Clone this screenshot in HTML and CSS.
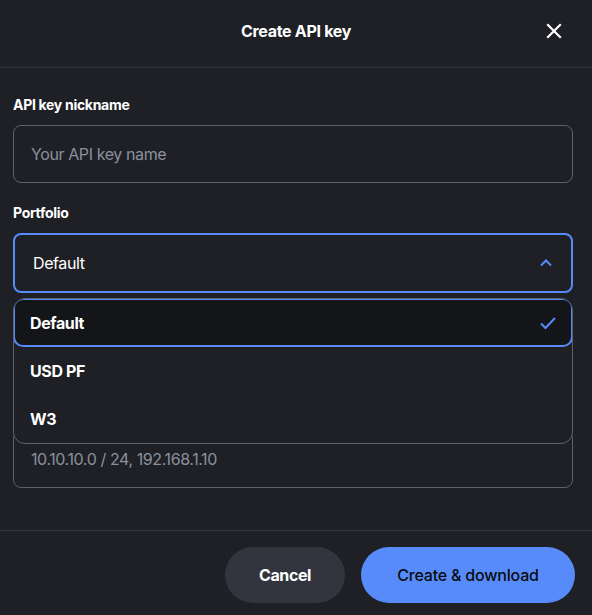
FILE: index.html
```html
<!DOCTYPE html>
<html lang="en">
<head>
  <meta charset="UTF-8">
  <meta name="viewport" content="width=device-width, initial-scale=1.0">
  <title>Create API key</title>
  <link rel="stylesheet" href="styles.css">
</head>
<body>
  <div class="modal">
    <div class="modal-header">
      <span></span>
      <h1>Create API key</h1>
      <button class="close-btn" aria-label="Close">
        <svg width="16" height="16" viewBox="0 0 16 16"><path d="M2 2 L14 14 M14 2 L2 14" stroke="#fff" stroke-width="2.2" stroke-linecap="square"/></svg>
      </button>
    </div>

    <div class="modal-body">
      <div class="field">
        <label class="field-label">API key nickname</label>
        <input class="text-input" type="text" placeholder="Your API key name">
      </div>

      <div class="field select-field">
        <label class="field-label">Portfolio</label>
        <div class="select open">
          <span>Default</span>
          <svg width="14" height="10" viewBox="0 0 14 10"><path d="M2 7.5 L7 2.5 L12 7.5" fill="none" stroke="#578bfa" stroke-width="2"/></svg>
        </div>
        <ul class="menu">
          <li class="menu-item selected">
            <span>Default</span>
            <svg width="18" height="16" viewBox="0 0 18 16"><path d="M2 8.5 L6.5 13 L16 3" fill="none" stroke="#578bfa" stroke-width="2"/></svg>
          </li>
          <li class="menu-item"><span>USD PF</span></li>
          <li class="menu-item"><span>W3</span></li>
        </ul>
      </div>

      <div class="field ip-field">
        <input class="text-input" type="text" aria-label="IP whitelist" placeholder="10.10.10.0 / 24, 192.168.1.10">
      </div>
    </div>

    <div class="modal-footer">
      <button class="btn btn-secondary">Cancel</button>
      <button class="btn btn-primary">Create &amp; download</button>
    </div>
  </div>
</body>
</html>
```

FILE: styles.css
```css
body {
  margin: 0;
  background-color: #1e2025;
  font-family: 'Inter', 'Noto Sans', sans-serif;
  color: #fff;
}

.modal {
  width: 592px;
}

.modal-header {
  box-sizing: border-box;
  display: grid;
  grid-template-columns: 1fr auto 1fr;
  align-items: center;
  height: 68px;
  border-bottom: 1px solid #32353d;
  padding: 0 26px 5px;
}

.modal-header h1 {
  margin: 0;
  font-size: 16px;
  font-weight: 700;
  letter-spacing: -0.3px;
}

.close-btn {
  justify-self: end;
  background: none;
  border: none;
  padding: 4px;
  display: flex;
  cursor: pointer;
}

.modal-body {
  padding: 27px 19px 42px 13px;
}

.field {
  margin-bottom: 20px;
}

.field-label {
  display: block;
  font-size: 14px;
  font-weight: 700;
  line-height: 20px;
  letter-spacing: -0.3px;
  margin-bottom: 10px;
}

.text-input {
  box-sizing: border-box;
  width: 100%;
  height: 58px;
  padding: 0 17px;
  background: transparent;
  border: 1px solid #5b616e;
  border-radius: 8px;
  color: #fff;
  font-family: inherit;
  font-size: 16px;
  letter-spacing: -0.4px;
  outline: none;
}

.text-input::placeholder {
  color: #8a919e;
}

.select-field {
  position: relative;
}

.ip-field {
  margin-top: 137px;
  margin-bottom: 0;
}

.select {
  box-sizing: border-box;
  height: 60px;
  display: flex;
  align-items: center;
  justify-content: space-between;
  padding: 0 18px 0 18px;
  border: 2px solid #578bfa;
  border-radius: 8px;
  font-size: 16px;
  letter-spacing: -0.4px;
}

.menu {
  position: absolute;
  left: 0;
  right: 0;
  top: 95px;
  z-index: 2;
  margin: 0;
  padding: 0;
  list-style: none;
  background-color: #1e2025;
  border: 1px solid #5b616e;
  border-radius: 12px;
  overflow: hidden;
}

.menu-item {
  box-sizing: border-box;
  height: 48px;
  display: flex;
  align-items: center;
  justify-content: space-between;
  padding: 0 14px 0 16px;
  font-size: 16px;
  font-weight: 700;
  letter-spacing: -0.4px;
}

.menu-item.selected {
  background-color: #141519;
  border: 2px solid #578bfa;
  border-radius: 10px;
  padding-left: 15px;
  margin: -1px -1px 0 -1px;
  height: 49px;
}

.modal-footer {
  display: flex;
  justify-content: flex-end;
  gap: 16px;
  border-top: 1px solid #32353d;
  padding: 16px 17px 12px;
}

.btn {
  height: 56px;
  border: none;
  border-radius: 28px;
  font-family: inherit;
  font-size: 16px;
  letter-spacing: -0.4px;
  cursor: pointer;
}

.btn-secondary {
  width: 120px;
  background-color: #32353d;
  color: #fff;
  font-weight: 700;
}

.btn-primary {
  width: 214px;
  background-color: #578bfa;
  color: #0a0b0d;
  font-weight: 500;
  letter-spacing: -0.2px;
}
```
